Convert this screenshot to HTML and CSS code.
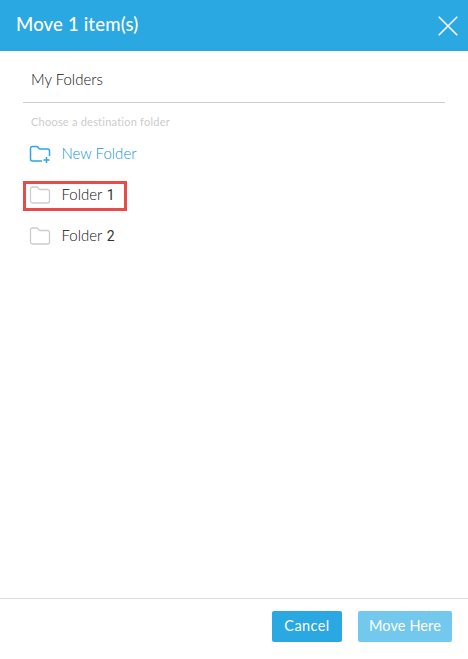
FILE: index.html
```html
<!DOCTYPE html>
<html lang="en"><head><meta charset="utf-8"><title>Move 1 item(s)</title><link rel="stylesheet" href="styles.css"></head>
<body>
<div class="dialog">
<header class="header"><h1 class="title">Move 1 item(s)</h1>
<svg class="close" width="20" height="20" viewBox="0 0 20 20"><path d="M.7.7l18.6 18.6M19.3.7L.7 19.3"/></svg></header>
<main class="content">
<div class="path">My Folders</div>
<p class="hint">Choose a destination folder</p>
<ul class="folders">
<li class="row new"><svg class="icon" width="22" height="18" viewBox="0 0 22 18"><path d="M13 16H3.500a2 2 0 0 1-2-2V3.500a2 2 0 0 1 2-2h4.200q.8 0 1.300.7l.8 1.100q.5.700 1.300.7h7.400a2 2 0 0 1 2 2V11M17.500 12v6M14.500 15h6"/></svg><span>New Folder</span></li>
<li class="row selected"><svg class="icon" width="22" height="18" viewBox="0 0 22 18"><path d="M3.500 1h4.200q.8 0 1.300.7l.8 1.100q.5.700 1.300.7h7.400a2 2 0 0 1 2 2V15a2 2 0 0 1-2 2h-15a2 2 0 0 1-2-2V3a2 2 0 0 1 2-2z"/></svg><span>Folder <b class="num">1</b></span></li>
<li class="row"><svg class="icon" width="22" height="18" viewBox="0 0 22 18"><path d="M3.500 1h4.200q.8 0 1.300.7l.8 1.100q.5.700 1.300.7h7.400a2 2 0 0 1 2 2V15a2 2 0 0 1-2 2h-15a2 2 0 0 1-2-2V3a2 2 0 0 1 2-2z"/></svg><span>Folder <b class="num">2</b></span></li>
</ul></main>
<footer class="footer"><button class="button cancel">Cancel</button><button class="button move">Move Here</button></footer>
</div></body></html>
```
FILE: styles.css
```css
*{box-sizing:border-box}
body{margin:0;font-family:Lato,"Open Sans",sans-serif;font-size:15px;font-weight:300;color:#111;background:#fff}
.dialog{height:659px;display:flex;flex-direction:column}
.header{height:51px;background:#29a8e1;color:#fff;display:flex;align-items:center;justify-content:space-between;padding:0 10px 0 16px}
.title{margin:0;padding-bottom:3px;font-size:18.5px;font-weight:500;letter-spacing:.18px}
.close{fill:none;stroke:#fff;stroke-width:1.6}
.content{flex:1;padding:0 23px}
.path{height:52px;padding:18px 8px 0;line-height:20px;border-bottom:1px solid #ccc}
.hint{margin:11px 8px 0;font-size:11px;font-weight:400;letter-spacing:.23px;line-height:16px;color:#ccc}
.folders{list-style:none;margin:10px 0 0;padding:0}
.row{width:104px;height:30px;margin-bottom:11px;padding:0 0 3px 6px;display:flex;align-items:center;gap:10.5px;white-space:nowrap}
.row span{margin-top:-2px}
.icon{flex:none;fill:none;stroke:#ccc;stroke-width:1.3}
.new{width:130px;color:#1696d4}
.new .icon{stroke:#29a8e1;stroke-width:1.5}
.selected{border:3px solid #e84c48;padding:0 0 3px 3px}
.num{margin-left:.7px;font-family:Roboto,sans-serif;font-size:14px;font-weight:400;color:#333}
.footer{height:61px;border-top:1px solid #ddd;display:flex;gap:16px;justify-content:flex-end;padding:12px 16px}
.button{height:31px;border:0;border-radius:2px;padding:0 0 2px;background:#29a8e1;color:#fff;font:400 14.5px Lato,sans-serif;letter-spacing:.1px}
.cancel{width:70px;letter-spacing:.4px}
.move{width:94px;background:#72c8ed}
```
